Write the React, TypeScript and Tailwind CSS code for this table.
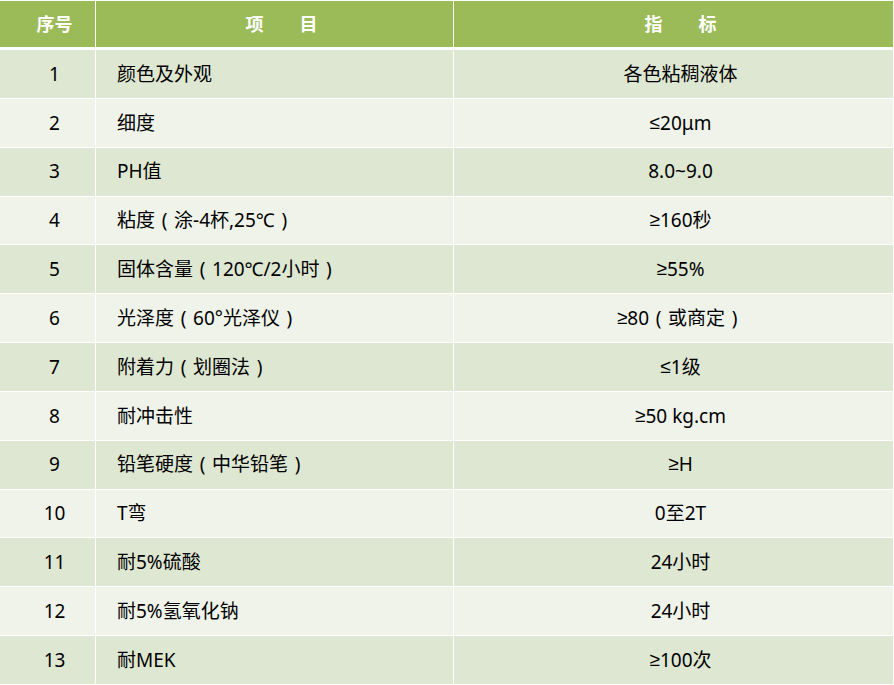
const rows: [string, string, string][] = [
  ["1", "颜色及外观", "各色粘稠液体"],
  ["2", "细度", "≤20μm"],
  ["3", "PH值", "8.0~9.0"],
  ["4", "粘度（涂-4杯,25℃）", "≥160秒"],
  ["5", "固体含量（120℃/2小时）", "≥55%"],
  ["6", "光泽度（60°光泽仪）", "≥80（或商定）"],
  ["7", "附着力（划圈法）", "≤1级"],
  ["8", "耐冲击性", "≥50 kg.cm"],
  ["9", "铅笔硬度（中华铅笔）", "≥H"],
  ["10", "T弯", "0至2T"],
  ["11", "耐5%硫酸", "24小时"],
  ["12", "耐5%氢氧化钠", "24小时"],
  ["13", "耐MEK", "≥100次"],
];

// full-width parens sit centred in their box, ≥/≤ come from a narrow latin font
function Cell({ text }: { text: string }) {
  return (
    <>
      {text.split(/([（）≥≤])/).map((part, i) => {
        if (part === "（" || part === "）")
          return (
            <span key={i} className="inline-block w-[1em] text-center">
              {part === "（" ? "(" : ")"}
            </span>
          );
        if (part === "≥" || part === "≤")
          return (
            <span key={i} className="font-['Liberation_Sans','DejaVu_Sans',sans-serif]">
              {part}
            </span>
          );
        return <span key={i}>{part}</span>;
      })}
    </>
  );
}

export default function App() {
  return (
    <div
      className="w-[894px] h-[685px] bg-white pt-px text-[19px] text-black"
      style={{ fontFamily: '"Noto Sans", "Noto Sans CJK SC", sans-serif' }}
    >
      <div className="w-[892px] flex flex-col">
        {/* Header */}
        <div className="grid grid-cols-[95px_357px_439px] gap-x-px h-[46px] mb-[3px] text-[18px]">
          <div className="bg-[#9bbb59] text-white font-bold flex items-center justify-center pl-[14px]">
            序号
          </div>
          <div className="bg-[#9bbb59] text-white font-bold flex items-center justify-center pl-[14px] whitespace-pre">
            项　　目
          </div>
          <div className="bg-[#9bbb59] text-white font-bold flex items-center justify-center pl-[14px] whitespace-pre">
            指　　标
          </div>
        </div>

        {/* Body */}
        <div className="flex flex-col gap-y-px">
          {rows.map(([no, item, spec], i) => {
            const bg = i % 2 === 0 ? "bg-[#dee7d1]" : "bg-[#eff3ea]";
            return (
              <div key={no} className="grid grid-cols-[95px_357px_439px] gap-x-px h-[47.85px]">
                <div className={`${bg} flex items-center justify-center pl-[14px]`}>{no}</div>
                <div className={`${bg} flex items-center pl-[21px] whitespace-pre`}>
                  <Cell text={item} />
                </div>
                <div className={`${bg} flex items-center justify-center pl-[14px] whitespace-pre`}>
                  <Cell text={spec} />
                </div>
              </div>
            );
          })}
        </div>
      </div>
    </div>
  );
}
